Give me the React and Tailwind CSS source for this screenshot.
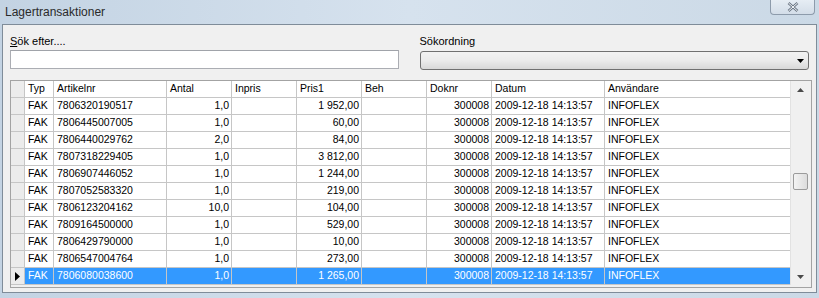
import { useState } from "react";

const columns = [
  { key: "typ", label: "Typ", w: "w-[29px]" },
  { key: "art", label: "Artikelnr", w: "w-[113px]" },
  { key: "antal", label: "Antal", w: "w-[65px]", right: true },
  { key: "inpris", label: "Inpris", w: "w-[65px]", right: true },
  { key: "pris", label: "Pris1", w: "w-[65px]", right: true },
  { key: "beh", label: "Beh", w: "w-[65px]", right: true },
  { key: "doknr", label: "Doknr", w: "w-[65px]", right: true },
  { key: "datum", label: "Datum", w: "w-[113px]" },
  { key: "anv", label: "Användare", w: "w-[186px]" },
];

const rows = [
  ["7806320190517", "1,0", "1 952,00"],
  ["7806445007005", "1,0", "60,00"],
  ["7806440029762", "2,0", "84,00"],
  ["7807318229405", "1,0", "3 812,00"],
  ["7806907446052", "1,0", "1 244,00"],
  ["7807052583320", "1,0", "219,00"],
  ["7806123204162", "10,0", "104,00"],
  ["7809164500000", "1,0", "529,00"],
  ["7806429790000", "1,0", "10,00"],
  ["7806547004764", "1,0", "273,00"],
  ["7806080038600", "1,0", "1 265,00"],
].map(([art, antal, pris]) => ({
  typ: "FAK",
  art,
  antal,
  inpris: "",
  pris,
  beh: "",
  doknr: "300008",
  datum: "2009-12-18 14:13:57",
  anv: "INFOFLEX",
}));

const GridRow = ({ row, selected }) => (
  <div className={`flex h-[17px] ${selected ? "bg-[#3399ff] text-white" : "bg-white text-black"}`}>
    <div className="w-[14px] shrink-0 flex items-center justify-center bg-[#ececec] border-r border-b border-[#c6c6c6]">
      {selected && (
        <svg width="5" height="9" viewBox="0 0 5 9">
          <path d="M0 0 L5 4.5 L0 9 Z" fill="#000" />
        </svg>
      )}
    </div>
    {columns.map((c) => (
      <div
        key={c.key}
        className={`${c.w} shrink-0 flex items-center border-r border-b border-[#c6c6c6] px-[2px] whitespace-nowrap overflow-hidden ${
          c.right ? "justify-end" : "justify-start pl-[3px]"
        }`}
      >
        {row[c.key]}
      </div>
    ))}
  </div>
);

export default function App() {
  const [selected] = useState(10);

  return (
    <div
      className="w-[819px] h-[298px] flex flex-col bg-gradient-to-r from-[#c3d3e3] via-[#d6e2ee] to-[#cbd9e6] overflow-hidden"
      style={{ fontFamily: '"Liberation Sans", Arial, sans-serif' }}
    >
      {/* title bar */}
      <div className="h-[24px] shrink-0 flex items-start justify-between">
        <div className="pl-[5px] pt-[3px] text-[12px] text-[#2a2a2a]">Lagertransaktioner</div>
        <div className="mr-[4px] w-[45px] h-[15px] rounded-b-[4px] border border-t-0 border-[#8d9bab] bg-gradient-to-b from-[#e6edf4] to-[#d3dde8] flex items-center justify-center">
          <svg width="12" height="10" viewBox="0 0 12 10">
            <path d="M1.5 1 L10.5 9 M10.5 1 L1.5 9" stroke="#6b7684" strokeWidth="2.6" />
            <path d="M1.5 1 L10.5 9 M10.5 1 L1.5 9" stroke="#f4f7fa" strokeWidth="1" />
          </svg>
        </div>
      </div>

      {/* body */}
      <div className="mx-[2px] mb-[5px] flex-1 border border-[#7f8c99] bg-[#f0f0f0] flex flex-col px-[7px] text-[11px]">
        <div className="flex gap-[20px] pt-[8px]">
          <div className="flex flex-col w-[389px]">
            <div className="h-[15px] text-black">
              <span className="underline">S</span>ök efter....
            </div>
            <div className="mt-[2px] h-[19px] bg-white border border-[#abadb3] border-t-[#a0a3a9]" />
          </div>
          <div className="flex flex-col w-[390px] ml-[1px]">
            <div className="h-[15px] text-black">Sökordning</div>
            <div className="mt-[3px] h-[19px] rounded-[3px] border border-[#707070] bg-gradient-to-b from-[#f2f2f2] via-[#ebebeb] to-[#d8d8d8] flex items-center justify-end pr-[4px]">
              <svg width="7" height="4" viewBox="0 0 7 4">
                <path d="M0 0 H7 L3.5 4 Z" fill="#000" />
              </svg>
            </div>
          </div>
        </div>

        {/* grid */}
        <div className="mt-[10px] w-[802px] h-[208px] border border-[#a3a3a3] bg-[#f0f0f0] flex text-[10.5px]">
          <div className="flex flex-col w-[779px] shrink-0">
            <div className="flex h-[17px] bg-white text-black">
              <div className="w-[14px] shrink-0 bg-[#ececec] border-r border-b border-[#c6c6c6]" />
              {columns.map((c) => (
                <div
                  key={c.key}
                  className={`${c.w} shrink-0 flex items-center pl-[3px] border-r border-b border-[#c6c6c6] whitespace-nowrap`}
                >
                  {c.label}
                </div>
              ))}
            </div>
            {rows.map((r, i) => (
              <GridRow key={i} row={r} selected={i === selected} />
            ))}
          </div>

          {/* scrollbar */}
          <div className="w-[19px] shrink-0 h-[204px] flex flex-col items-center bg-[#f0f0f0] border-l border-[#e2e2e2]">
            <div className="h-[17px] flex items-center justify-center">
              <svg width="7" height="4" viewBox="0 0 7 4">
                <path d="M0 4 H7 L3.5 0 Z" fill="#4a4a4a" />
              </svg>
            </div>
            <div className="mt-[75px] w-[15px] h-[17px] rounded-[2px] border border-[#9b9b9b] bg-gradient-to-r from-[#f4f4f4] to-[#dcdcdc]" />
            <div className="flex-1" />
            <div className="h-[17px] flex items-center justify-center">
              <svg width="7" height="4" viewBox="0 0 7 4">
                <path d="M0 0 H7 L3.5 4 Z" fill="#4a4a4a" />
              </svg>
            </div>
          </div>
        </div>
      </div>
    </div>
  );
}
